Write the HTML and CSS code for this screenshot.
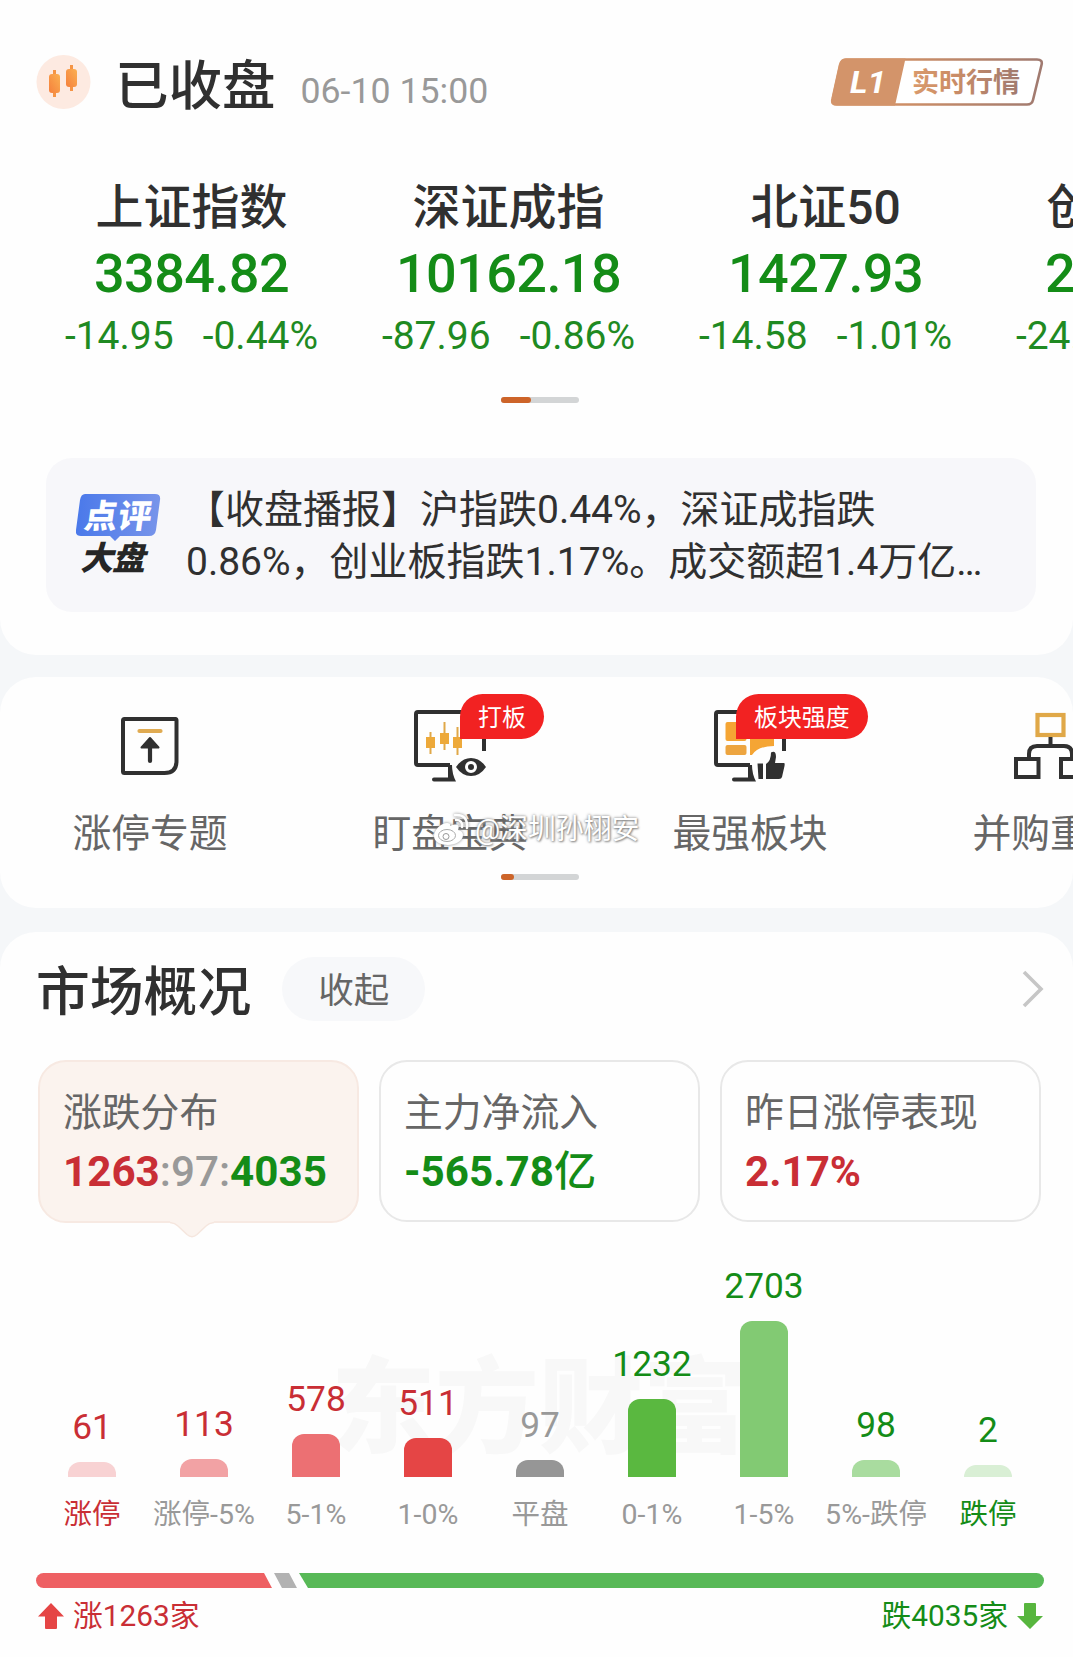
FILE: index.html
```html
<!DOCTYPE html>
<html lang="zh-CN">
<head>
  <meta charset="UTF-8">
  <meta name="viewport" content="width=device-width, initial-scale=1">
  <title>市场概况</title>
  <link rel="stylesheet" href="styles.css">
</head>
<body>
  <!-- 指数行情 -->
  <section class="panel quotes">
    <div class="status">
      <svg class="status-icon" width="56" height="56" viewBox="0 0 56 56">
        <defs>
          <linearGradient id="candle" x1="0" y1="1" x2="1" y2="0">
            <stop offset="0" stop-color="#f5803c"/>
            <stop offset="1" stop-color="#fbb052"/>
          </linearGradient>
        </defs>
        <circle cx="27.500" cy="28" r="27" fill="#fdeae1"/>
        <path d="M18.500 16v27M35.500 11v26" stroke="#f59445" stroke-width="3"/>
        <rect x="13" y="20" width="11" height="19" rx="3" fill="url(#candle)"/>
        <rect x="30" y="15" width="11" height="18" rx="3" fill="url(#candle)"/>
      </svg>
      <h1>已收盘</h1>
      <span class="status-time">06-10 15:00</span>
      <svg class="level" width="214" height="50" viewBox="0 0 214 50">
        <defs>
          <linearGradient id="copper" x1="0" y1="0" x2="1" y2="0">
            <stop offset="0" stop-color="#d99a6c"/>
            <stop offset="0.350" stop-color="#cd8e66"/>
            <stop offset="1" stop-color="#a07a70"/>
          </linearGradient>
        </defs>
        <path d="M16 2.500H207Q213 2.500 211.500 8L203 43Q202 47.500 197 47.500H7Q1 47.500 2.500 42L10 8Q11.500 2.500 16 2.500Z" fill="#fff" stroke="url(#copper)" stroke-width="2.600"/>
        <path d="M15 1.500H75.500L65 48.500H6Q0 48.500 1.500 42L9 8Q10.500 1.500 15 1.500Z" fill="#d3946a"/>
        <text class="level-num" x="20" y="36" textLength="36" lengthAdjust="spacingAndGlyphs">L1</text>
        <text class="level-text" x="82" y="35" fill="url(#copper)" textLength="108">实时行情</text>
      </svg>
    </div>

    <div class="index-list">
      <div class="index">
        <div class="index-name">上证指数</div>
        <div class="index-value">3384.82</div>
        <div class="index-change"><span>-14.95</span><span>-0.44%</span></div>
      </div>
      <div class="index">
        <div class="index-name">深证成指</div>
        <div class="index-value">10162.18</div>
        <div class="index-change"><span>-87.96</span><span>-0.86%</span></div>
      </div>
      <div class="index">
        <div class="index-name">北证50</div>
        <div class="index-value">1427.93</div>
        <div class="index-change"><span>-14.58</span><span>-1.01%</span></div>
      </div>
      <div class="index">
        <div class="index-name">创业板指</div>
        <div class="index-value">2017.63</div>
        <div class="index-change"><span>-24.02</span><span>-1.17%</span></div>
      </div>
    </div>
    <div class="pager"><i class="pager-on wide"></i></div>

    <div class="news">
      <svg class="news-icon" width="86" height="84" viewBox="0 0 86 84">
        <defs>
          <linearGradient id="bubble" x1="0" y1="0" x2="1" y2="0">
            <stop offset="0" stop-color="#4a79ea"/>
            <stop offset="1" stop-color="#7894ea"/>
          </linearGradient>
        </defs>
        <path d="M9 1H79Q85 1 84 7L80 37Q79 43 73 43H44L39 48L34 43H5Q-1 43 0 37L4 7Q5 1 9 1Z" fill="url(#bubble)"/>
        <text class="news-tag light" transform="translate(7 35) skewX(-8)" textLength="67">点评</text>
        <text class="news-tag dark" transform="translate(4 77) skewX(-14)" textLength="65">大盘</text>
      </svg>
      <p>【收盘播报】沪指跌0.44%，深证成指跌<br>0.86%，创业板指跌1.17%。成交额超1.4万亿…</p>
    </div>
  </section>

  <!-- 功能入口 -->
  <section class="panel tools">
    <div class="tool-list">
      <div class="tool">
        <svg width="72" height="72" viewBox="0 0 72 72">
          <path d="M10.500 9H61.500Q62.500 9 62.500 10.500V51Q62.500 63 50.500 63H10.500Q9 63 9 61.500V10.500Q9 9 10.500 9Z" fill="none" stroke="#303030" stroke-width="4"/>
          <path d="M25.500 21H46.500" stroke="#e0ab52" stroke-width="4.200" stroke-linecap="round"/>
          <path d="M36 35V51" stroke="#303030" stroke-width="4.200" stroke-linecap="round"/>
          <path d="M36 28L44.500 37.500H27.500Z" fill="#303030" stroke="#303030" stroke-width="2" stroke-linejoin="round"/>
        </svg>
        <span>涨停专题</span>
      </div>
      <div class="tool">
        <svg width="72" height="72" viewBox="0 0 72 72">
          <path d="M36 55H4Q2 55 2 53V4Q2 2 4 2H68Q70 2 70 4V41" fill="none" stroke="#303030" stroke-width="4"/>
          <path d="M34 55H38Q38 64 42 71.500H20Q18 71.500 18 69.500T20 67.500H34Z" fill="#303030"/>
          <path d="M16.500 22V44M30.500 12V40M43.500 17V45" stroke="#e0a848" stroke-width="2"/>
          <path d="M12 27h9v11h-9zM26 23h9v11h-9zM39 27h9v11h-9z" fill="#eda93a"/>
          <path d="M42 57Q48 48 57 48T72 57Q66 66 57 66T42 57Z" fill="#303030"/>
          <circle cx="57" cy="57" r="4.500" fill="#303030" stroke="#fff" stroke-width="3"/>
        </svg>
        <b class="tag tag-board">打板</b>
        <span>盯盘宝典</span>
      </div>
      <div class="tool">
        <svg width="72" height="72" viewBox="0 0 72 72">
          <path d="M36 55H4Q2 55 2 53V4Q2 2 4 2H68Q70 2 70 4V41" fill="none" stroke="#303030" stroke-width="4"/>
          <path d="M34 55H38Q38 64 42 71.500H20Q18 71.500 18 69.500T20 67.500H34Z" fill="#303030"/>
          <rect x="11.500" y="12" width="21" height="19" rx="2" fill="#f5a534"/>
          <rect x="11.500" y="35" width="21" height="10" rx="2" fill="#eda540"/>
          <path d="M36 12H60V36Q44 36 38 45H36Z" fill="#f5a534"/>
          <path d="M43.500 53.500h5.500v15.500h-4.500zM52 54Q57 51 57 42.500Q62 40 62 47L61 53H70Q71 53 70.500 56L68 67Q67.500 69 65 69H52Z" fill="#303030"/>
        </svg>
        <b class="tag tag-strength">板块强度</b>
        <span>最强板块</span>
      </div>
      <div class="tool">
        <svg width="72" height="72" viewBox="0 0 72 72">
          <rect x="23.500" y="5" width="26" height="20" fill="none" stroke="#e0a848" stroke-width="4.200"/>
          <path d="M36.500 27V36M15 48V44Q15 36 23 36H50Q58 36 58 44V48" fill="none" stroke="#303030" stroke-width="4"/>
          <path d="M2 49H24.500V67H2ZM47 49H69.500V67H47Z" fill="none" stroke="#303030" stroke-width="4"/>
        </svg>
        <span>并购重组</span>
      </div>
    </div>
    <div class="pager"><i class="pager-on"></i></div>
    <div class="watermark">
      <svg width="36" height="34" viewBox="0 0 36 34">
        <path d="M14 10C8 10 1 17 1 23S8 32 15 32S30 28 30 22Q30 18 25 17Q27 12 23 11.500Q20 11 17 13Q18 10 14 10Z" fill="#fff"/>
        <ellipse cx="14" cy="22.500" rx="8.500" ry="6" fill="none" stroke="#aaa" stroke-width="1"/>
        <circle cx="13" cy="23.500" r="3" fill="none" stroke="#999" stroke-width="1"/>
        <path d="M22 2Q35 1 34 15M23 7Q30 7 29 14" fill="none" stroke="#fff" stroke-width="2.500" stroke-linecap="round"/>
      </svg>
      <span>@深圳孙栩安</span>
    </div>
  </section>

  <!-- 市场概况 -->
  <section class="panel overview">
    <div class="overview-head">
      <h2>市场概况</h2>
      <button class="fold">收起</button>
      <svg class="more" width="22" height="38" viewBox="0 0 22 38">
        <path d="M2 2L19 19L2 36" fill="none" stroke="#c6c6c6" stroke-width="3.600"/>
      </svg>
    </div>

    <div class="cards">
      <div class="card active">
        <div class="card-label">涨跌分布</div>
        <div class="card-value"><span class="up">1263</span><span class="flat">:97:</span><span class="down">4035</span></div>
        <svg class="card-arrow" width="44" height="17" viewBox="0 0 44 17">
          <path d="M0 0V1.500Q5 2 8 5L17 13.500Q22 18 27 13.500L36 5Q39 2 44 1.500V0Z" fill="#fbf3ee"/>
          <path d="M0 1.500Q5 2 8 5L17 13.500Q22 18 27 13.500L36 5Q39 2 44 1.500" fill="none" stroke="#f5e6de" stroke-width="1.500"/>
        </svg>
      </div>
      <div class="card">
        <div class="card-label">主力净流入</div>
        <div class="card-value down">-565.78<span class="unit">亿</span></div>
      </div>
      <div class="card">
        <div class="card-label">昨日涨停表现</div>
        <div class="card-value up">2.17%</div>
      </div>
    </div>

    <div class="chart">
      <div class="chart-mark">东方财富</div>
      <div class="col up"><span class="num">61</span><i class="bar b1"></i><span class="range">涨停</span></div>
      <div class="col up"><span class="num">113</span><i class="bar b2"></i><span class="range grey">涨停-5%</span></div>
      <div class="col up"><span class="num">578</span><i class="bar b3"></i><span class="range grey">5-1%</span></div>
      <div class="col up"><span class="num">511</span><i class="bar b4"></i><span class="range grey">1-0%</span></div>
      <div class="col flat"><span class="num">97</span><i class="bar b5"></i><span class="range grey">平盘</span></div>
      <div class="col down"><span class="num">1232</span><i class="bar b6"></i><span class="range grey">0-1%</span></div>
      <div class="col down"><span class="num">2703</span><i class="bar b7"></i><span class="range grey">1-5%</span></div>
      <div class="col down"><span class="num">98</span><i class="bar b8"></i><span class="range grey">5%-跌停</span></div>
      <div class="col down"><span class="num">2</span><i class="bar b9"></i><span class="range">跌停</span></div>
    </div>

    <div class="ratio">
      <i class="ratio-up"></i>
      <i class="ratio-flat"></i>
      <i class="ratio-down"></i>
    </div>
    <div class="ratio-text">
      <span class="up">
        <svg width="26" height="26" viewBox="0 0 26 26"><path d="M13 0L26 13.500H19V25Q19 26 18 26H8Q7 26 7 25V13.500H0Z" fill="#e54545"/></svg>
        涨1263家
      </span>
      <span class="down">
        跌4035家
        <svg width="26" height="26" viewBox="0 0 26 26"><path d="M13 26L26 13H19V1Q19 0 18 0H8Q7 0 7 1V13H0Z" fill="#57b53e"/></svg>
      </span>
    </div>
  </section>
</body>
</html>
```
FILE: styles.css
```css
* {
  box-sizing: border-box;
  margin: 0;
  padding: 0;
}

body {
  width: 1073px;
  height: 1657px;
  overflow: hidden;
  background: #f5f7f9;
  color: #303030;
  font-family: Roboto, "Noto Sans CJK SC", sans-serif;
}

svg {
  display: block;
  flex: none;
}

.panel {
  background: #fefefe;
  border-radius: 36px;
  overflow: hidden;
}

.up {
  color: #c92e35;
}

.down {
  color: #148c17;
}

.flat {
  color: #999;
}

/* 指数行情 */
.quotes {
  height: 655px;
  padding-top: 54px;
  border-radius: 0 0 36px 36px;
}

.status {
  display: flex;
  align-items: center;
  height: 56px;
  padding: 0 29px 0 36px;
}

h1 {
  margin: 9px 0 0 23px;
  font-size: 53.5px;
  font-weight: 500;
  line-height: 56px;
}

.status-time {
  margin: 17px 0 0 25px;
  color: #999;
  font-size: 35.7px;
  line-height: 56px;
  white-space: nowrap;
}

.level {
  margin-left: auto;
}

.level-num {
  fill: #fff;
  font-size: 32px;
  font-weight: 700;
  font-style: italic;
}

.level-text {
  font-size: 27px;
  font-weight: 700;
}

.index-list {
  display: flex;
  width: 1268px;
  margin: 70px 0 0 33px;
}

.index {
  width: 317px;
  text-align: center;
}

.index-name {
  font-size: 48px;
  font-weight: 500;
  line-height: 56px;
}

.index-value {
  margin-top: 5px;
  color: #148c17;
  font-size: 54px;
  font-weight: 500;
  letter-spacing: -0.6px;
  line-height: 66px;
}

.index-change {
  display: flex;
  justify-content: center;
  gap: 29px;
  margin-top: 7px;
  color: #1f8a22;
  font-size: 39px;
  line-height: 44px;
}

.pager {
  width: 78px;
  height: 6px;
  margin: 39px auto 0 501px;
  border-radius: 3px;
  background: #d3d5d6;
}

.pager-on {
  display: block;
  width: 13px;
  height: 6px;
  border-radius: 3px;
  background: #cd6429;
}

.pager-on.wide {
  width: 30px;
}

.news {
  display: flex;
  height: 154px;
  margin: 55px 37px 0 46px;
  padding: 27px 0 0 30px;
  border-radius: 26px;
  background: #f7f7fa;
}

.news-icon {
  margin-top: 8px;
}

.news-tag {
  font-size: 33px;
  font-weight: 900;
}

.light {
  fill: #fff;
}

.dark {
  fill: #262626;
}

.news p {
  margin-left: 24px;
  font-size: 39px;
  line-height: 51.5px;
  white-space: nowrap;
}

/* 功能入口 */
.tools {
  position: relative;
  height: 231px;
  margin-top: 22px;
  padding-top: 33px;
}

.tool-list {
  display: flex;
  width: 1200px;
}

.tool {
  position: relative;
  display: flex;
  flex-direction: column;
  align-items: center;
  gap: 29px;
  width: 300px;
  color: #666;
  font-size: 38.8px;
  line-height: 46px;
}

.tag {
  position: absolute;
  top: -16px;
  height: 45px;
  padding: 0 18px;
  border-radius: 23px 23px 23px 0;
  background: #f22222;
  color: #fff;
  font-size: 23.9px;
  font-weight: 400;
  line-height: 49px;
}

.tag-board {
  left: 160px;
}

.tag-strength {
  left: 136px;
}

.tools .pager {
  margin-top: 17px;
}

.watermark {
  position: absolute;
  left: 433px;
  top: 135px;
  display: flex;
  align-items: center;
  gap: 6px;
  color: #fff;
  font-size: 27.9px;
  line-height: 36px;
  text-shadow: 0 0 3px #777, 1px 1px 2px #999;
}

.watermark svg {
  filter: drop-shadow(0 0 1.5px #888);
}

/* 市场概况 */
.overview {
  height: 760px;
  margin-top: 24px;
  padding: 25px 29px 0 36px;
}

.overview-head {
  display: flex;
  align-items: center;
  height: 64px;
}

h2 {
  margin-top: 7px;
  font-size: 53.8px;
  font-weight: 500;
  line-height: 64px;
}

.fold {
  width: 143px;
  height: 64px;
  margin-left: 31px;
  padding-bottom: 3px;
  border: none;
  border-radius: 32px;
  background: #f7f8fa;
  color: #666;
  font-family: inherit;
  font-size: 35.5px;
}

.more {
  margin-left: auto;
}

.cards {
  display: flex;
  gap: 20px;
  margin: 39px 3px 0 2px;
}

.card {
  position: relative;
  flex: 1;
  height: 162px;
  padding: 28px 0 0 23px;
  border: 2px solid #e8e8e8;
  border-radius: 28px;
}

.card.active {
  height: 163px;
  border-color: #f7e9e2;
  background: #fbf3ee;
}

.card-label {
  color: #666;
  font-size: 38.8px;
  line-height: 46px;
}

.card-value {
  margin-top: 11px;
  font-size: 42.2px;
  font-weight: 700;
  line-height: 50px;
  white-space: nowrap;
}

.card-value .flat {
  font-weight: 500;
}

.unit {
  font-weight: 500;
}

.card-arrow {
  position: absolute;
  left: 130px;
  bottom: -17px;
}

.chart {
  position: relative;
  display: flex;
  align-items: flex-end;
  width: 1008px;
  height: 263px;
  margin-top: 47px;
}

.chart-mark {
  position: absolute;
  left: 295px;
  top: 80px;
  color: #f8f8f8;
  font-size: 104px;
  font-weight: 900;
  line-height: 120px;
}

.col {
  position: relative;
  display: flex;
  flex-direction: column;
  align-items: center;
  width: 112px;
  white-space: nowrap;
}

.num {
  margin-bottom: 14px;
  font-size: 35.3px;
  line-height: 42px;
}

.bar {
  width: 48px;
  border-radius: 12px 12px 0 0;
}

.b1 { height: 15px; background: #f8d2d3; }
.b2 { height: 18px; background: #f2a2a4; }
.b3 { height: 43px; background: #ec7073; }
.b4 { height: 39px; background: #e54545; }
.b5 { height: 17px; background: #969696; }
.b6 { height: 78px; background: #5ab840; }
.b7 { height: 156px; background: #82ca73; }
.b8 { height: 17px; background: #a9dc9f; }
.b9 { height: 12px; background: #d9efd5; }

.range {
  margin-top: 20px;
  font-size: 28.5px;
  line-height: 36px;
}

.range.grey {
  color: #999;
}

/* 涨跌比例条 */
.ratio {
  display: flex;
  width: 1008px;
  height: 15px;
  margin-top: 40px;
}

.ratio-up {
  width: 236px;
  border-radius: 8px 0 0 8px;
  background: #ee6063;
  clip-path: polygon(0 0, 228px 0, 100% 100%, 0 100%);
}

.ratio-flat {
  width: 23px;
  margin-left: 2px;
  background: #b2b2b2;
  clip-path: polygon(0 0, 15px 0, 100% 100%, 8px 100%);
}

.ratio-down {
  flex: 1;
  margin-left: 2px;
  border-radius: 0 8px 8px 0;
  background: #58b957;
  clip-path: polygon(0 0, 100% 0, 100% 100%, 9px 100%);
}

.ratio-text {
  display: flex;
  justify-content: space-between;
  width: 1005px;
  margin: 10px 0 0 2px;
  font-size: 29.8px;
  line-height: 36px;
}

.ratio-text span {
  display: flex;
  align-items: center;
  gap: 9px;
}
```
